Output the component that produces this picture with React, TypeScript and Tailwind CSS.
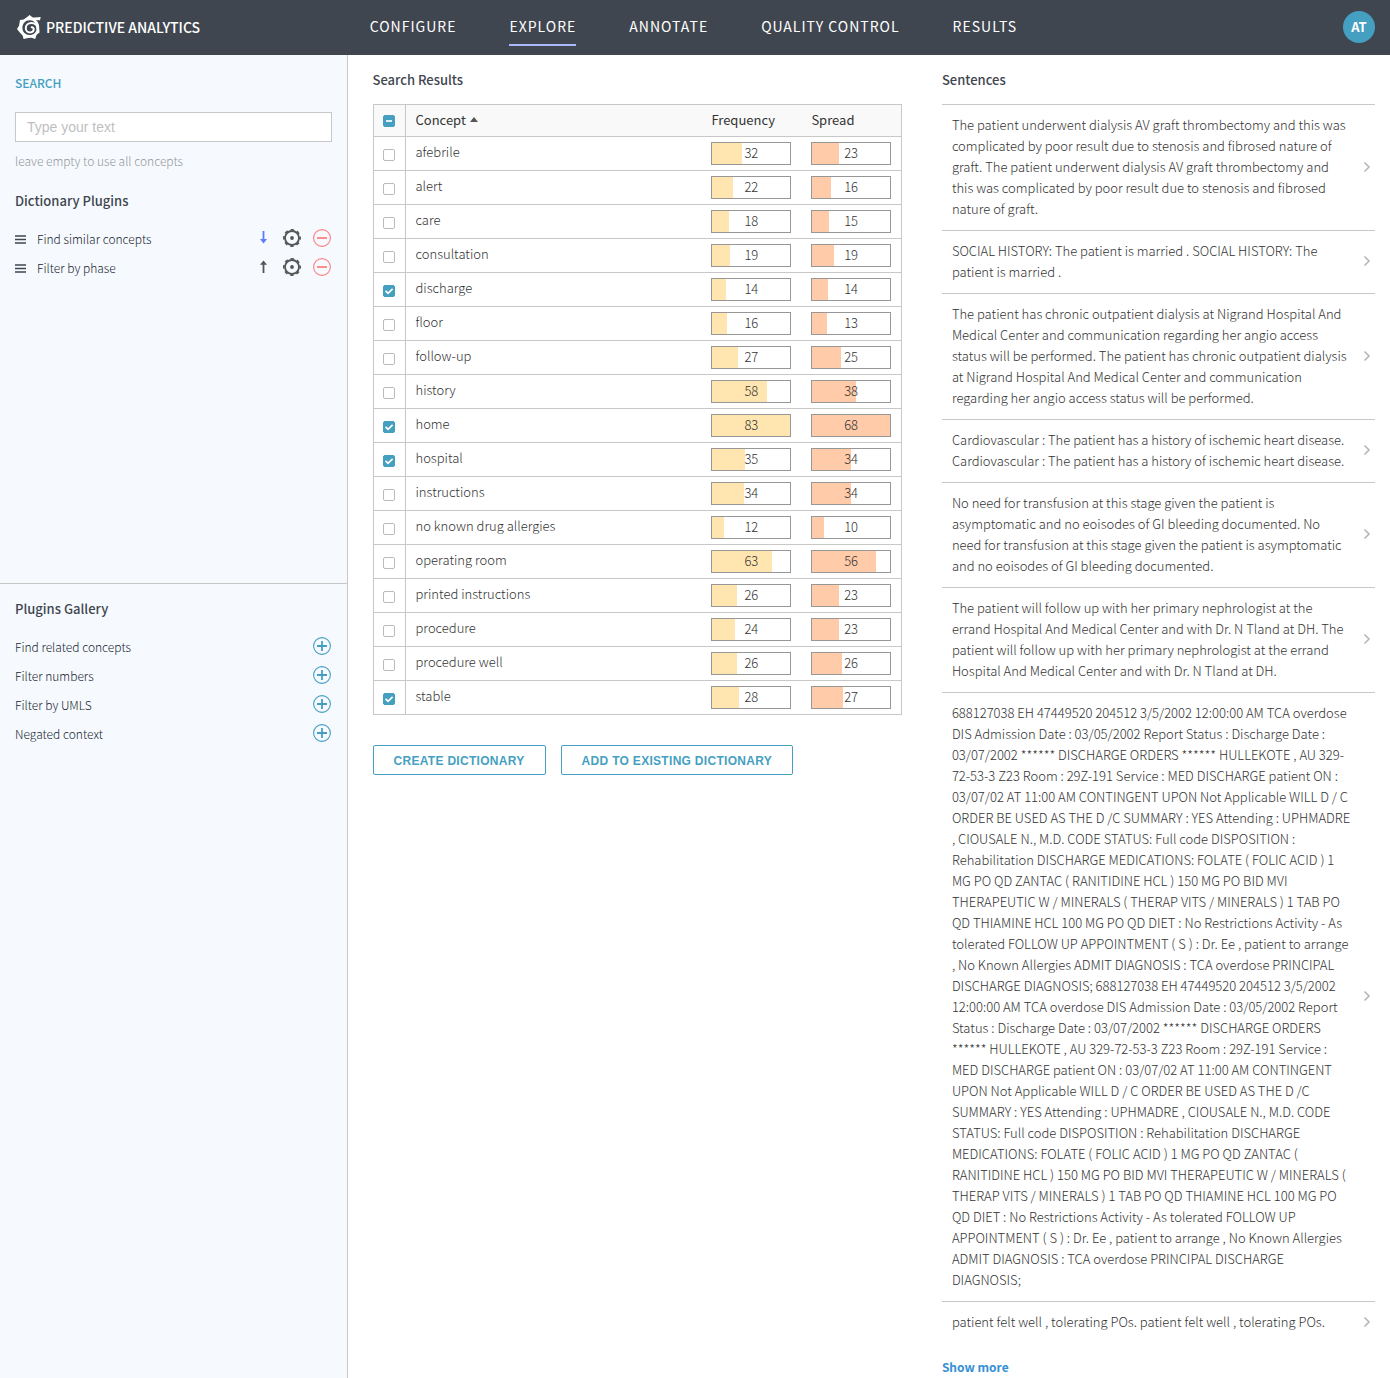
import { useEffect, useRef, useState } from "react";

const NAV = ["Configure", "Explore", "Annotate", "Quality Control", "Results"];

const PLUGINS = [
  { name: "Find similar concepts", direction: "down" },
  { name: "Filter by phase", direction: "up" },
];

const GALLERY = ["Find related concepts", "Filter numbers", "Filter by UMLS", "Negated context"];

type Concept = { name: string; frequency: number; spread: number };

const CONCEPTS: Concept[] = [
  { name: "afebrile", frequency: 32, spread: 23 },
  { name: "alert", frequency: 22, spread: 16 },
  { name: "care", frequency: 18, spread: 15 },
  { name: "consultation", frequency: 19, spread: 19 },
  { name: "discharge", frequency: 14, spread: 14 },
  { name: "floor", frequency: 16, spread: 13 },
  { name: "follow-up", frequency: 27, spread: 25 },
  { name: "history", frequency: 58, spread: 38 },
  { name: "home", frequency: 83, spread: 68 },
  { name: "hospital", frequency: 35, spread: 34 },
  { name: "instructions", frequency: 34, spread: 34 },
  { name: "no known drug allergies", frequency: 12, spread: 10 },
  { name: "operating room", frequency: 63, spread: 56 },
  { name: "printed instructions", frequency: 26, spread: 23 },
  { name: "procedure", frequency: 24, spread: 23 },
  { name: "procedure well", frequency: 26, spread: 26 },
  { name: "stable", frequency: 28, spread: 27 },
];

const DISCHARGE =
  "688127038 EH 47449520 204512 3/5/2002 12:00:00 AM TCA overdose DIS Admission Date : 03/05/2002 Report Status : Discharge Date : 03/07/2002 ****** DISCHARGE ORDERS ****** HULLEKOTE , AU 329-72-53-3 Z23 Room : 29Z-191 Service : MED DISCHARGE patient ON : 03/07/02 AT 11:00 AM CONTINGENT UPON Not Applicable WILL D / C ORDER BE USED AS THE D /C SUMMARY : YES Attending : UPHMADRE , CIOUSALE N., M.D. CODE STATUS: Full code DISPOSITION : Rehabilitation DISCHARGE MEDICATIONS: FOLATE ( FOLIC ACID ) 1 MG PO QD ZANTAC ( RANITIDINE HCL ) 150 MG PO BID MVI THERAPEUTIC W / MINERALS ( THERAP VITS / MINERALS ) 1 TAB PO QD THIAMINE HCL 100 MG PO QD DIET : No Restrictions Activity - As tolerated FOLLOW UP APPOINTMENT ( S ) : Dr. Ee , patient to arrange , No Known Allergies ADMIT DIAGNOSIS : TCA overdose PRINCIPAL DISCHARGE DIAGNOSIS;";

const SENTENCES = [
  "The patient underwent dialysis AV graft thrombectomy and this was complicated by poor result due to stenosis and fibrosed nature of graft. The patient underwent dialysis AV graft thrombectomy and this was complicated by poor result due to stenosis and fibrosed nature of graft.",
  "SOCIAL HISTORY: The patient is married . SOCIAL HISTORY: The patient is married .",
  "The patient has chronic outpatient dialysis at Nigrand Hospital And Medical Center and communication regarding her angio access status will be performed. The patient has chronic outpatient dialysis at Nigrand Hospital And Medical Center and communication regarding her angio access status will be performed.",
  "Cardiovascular : The patient has a history of ischemic heart disease. Cardiovascular : The patient has a history of ischemic heart disease.",
  "No need for transfusion at this stage given the patient is asymptomatic and no eoisodes of GI bleeding documented. No need for transfusion at this stage given the patient is asymptomatic and no eoisodes of GI bleeding documented.",
  "The patient will follow up with her primary nephrologist at the errand Hospital And Medical Center and with Dr. N Tland at DH. The patient will follow up with her primary nephrologist at the errand Hospital And Medical Center and with Dr. N Tland at DH.",
  `${DISCHARGE} ${DISCHARGE}`,
  "patient felt well , tolerating POs. patient felt well , tolerating POs.",
];

function Logo() {
  return (
    <svg width="24" height="24" viewBox="0 0 24 24" fill="none" stroke="#fff" aria-hidden="true">
      <path
        fill="#fff"
        stroke="none"
        fillRule="evenodd"
        d="M12.6 0 L15.4 2.3 C18 2.8 21 2.2 23.7 2 L23 5.3 C21.6 5 20.2 5 19 4.9 C21.4 7 22.4 10 22.2 13 L22.6 17.6 L19.6 19.8 L18.2 24 L14.6 22.8 L11 23 L6.6 24 L5.6 20.4 L3 17.8 L0 14 L2 10.8 L3 5 L6.6 4.4 L9.8 2.3 Z M12.8 5.2 C8.4 5.2 5.4 8.6 5.4 12.8 C5.4 17 8.6 20 12.6 20 C16.6 20 19.6 17.2 19.6 13.4 C19.6 8.6 16.8 5.2 12.8 5.2 Z"
      />
      <path
        d="M20.4 13.6 C20.2 9.8 17.6 8 14.4 8 C11 8 8.8 10.4 8.8 13.2 C8.8 15.8 10.7 17.4 13 17.4 C15.3 17.4 16.7 15.8 16.7 14.1 C16.7 12.8 15.8 12.1 14.7 12.3"
        strokeWidth="2"
        strokeLinecap="round"
      />
    </svg>
  );
}

function ArrowIcon({ direction }: { direction: string }) {
  return direction === "down" ? (
    <svg width="7" height="13" viewBox="0 0 7 13" aria-hidden="true">
      <path d="M2.6 0H4.4V8H7L3.5 12.6L0 8H2.6Z" fill="#5b7cff" />
    </svg>
  ) : (
    <svg width="7" height="13" viewBox="0 0 7 13" aria-hidden="true">
      <path d="M2.6 13H4.4V4.8H7L3.5 .4L0 4.8H2.6Z" fill="#555" />
    </svg>
  );
}

function GearIcon() {
  return (
    <svg width="18" height="18" viewBox="0 0 18 18" fill="none" aria-hidden="true">
      <circle cx="9" cy="9" r="7" stroke="#555" strokeWidth="1.8" />
      <circle cx="9" cy="9" r="8.2" stroke="#555" strokeWidth="1.6" strokeDasharray="3.4 3.04" strokeDashoffset="1.7" />
      <circle cx="9" cy="9" r="1.9" fill="#555" />
    </svg>
  );
}

function CircleIcon({ plus }: { plus?: boolean }) {
  const color = plus ? "#459fc1" : "#ff8080";
  return (
    <svg width="18" height="18" viewBox="0 0 18 18" fill="none" stroke={color} aria-hidden="true">
      <circle cx="9" cy="9" r="8.4" strokeWidth="1.1" />
      <path d={plus ? "M4 9H14M9 4V14" : "M4 9H14"} strokeWidth="1.8" />
    </svg>
  );
}

function CheckBox({
  label,
  checked,
  mixed = false,
  onChange,
}: {
  label: string;
  checked: boolean;
  mixed?: boolean;
  onChange: () => void;
}) {
  const ref = useRef<HTMLInputElement>(null);
  useEffect(() => {
    if (ref.current) ref.current.indeterminate = mixed;
  }, [mixed]);
  return (
    <span className="relative block size-3">
      <input
        ref={ref}
        type="checkbox"
        aria-label={label}
        checked={checked}
        onChange={onChange}
        className="block size-3 cursor-pointer appearance-none rounded-[2px] border border-[#bbb] bg-white checked:border-[#459fc1] checked:bg-[#459fc1] indeterminate:border-[#459fc1] indeterminate:bg-[#459fc1]"
      />
      {(checked || mixed) && (
        <svg
          viewBox="0 0 12 12"
          className="pointer-events-none absolute inset-0 size-3"
          fill="none"
          stroke="#fff"
          strokeWidth="1.7"
          aria-hidden="true"
        >
          <path d={mixed ? "M3 6H9" : "M2.6 5.9L5 8.4L9.6 3.9"} />
        </svg>
      )}
    </span>
  );
}

function Meter({ value, max, fill }: { value: number; max: number; fill: string }) {
  return (
    <div className="relative h-[23px] border border-[#979797] bg-white text-center leading-[19px]">
      <div className={`absolute inset-y-0 left-0 ${fill}`} style={{ width: `${(value / max) * 100}%` }} />
      <span className="relative">{value}</span>
    </div>
  );
}

function ResultsTable() {
  const [selected, setSelected] = useState(["discharge", "home", "hospital", "stable"]);
  const all = selected.length === CONCEPTS.length;
  const toggle = (name: string) =>
    setSelected((s) => (s.includes(name) ? s.filter((n) => n !== name) : [...s, name]));

  return (
    <table className="w-full table-fixed border-collapse border border-[#c8c8c8] text-[13px]">
      <colgroup>
        <col className="w-8" />
        <col />
        <col className="w-[100px]" />
        <col className="w-[100px]" />
      </colgroup>
      <thead>
        <tr className="h-8 border-b border-[#c8c8c8] bg-[#f9f9f9] text-left">
          <th className="border-r border-[#c8c8c8] pl-[9px]">
            <CheckBox
              label="Select all concepts"
              checked={all}
              mixed={!all && selected.length > 0}
              onChange={() => setSelected(all ? [] : CONCEPTS.map((c) => c.name))}
            />
          </th>
          <th className="px-2.5 pb-0.5 font-normal" aria-sort="ascending">
            <button className="flex items-center gap-1 leading-5">
              Concept
              <svg width="8" height="5" viewBox="0 0 8 5" aria-hidden="true">
                <path d="M4 0L8 5H0Z" fill="#555" />
              </svg>
            </button>
          </th>
          <th className="px-2.5 pb-0.5 font-normal leading-5">Frequency</th>
          <th className="px-2.5 pb-0.5 font-normal leading-5">Spread</th>
        </tr>
      </thead>
      <tbody>
        {CONCEPTS.map((c) => (
          <tr key={c.name} className="h-[34px] border-b border-[#c8c8c8]">
            <td className="border-r border-[#c8c8c8] pt-[3px] pl-[9px]">
              <CheckBox label={`Select ${c.name}`} checked={selected.includes(c.name)} onChange={() => toggle(c.name)} />
            </td>
            <td className="px-2.5 pb-1 leading-5">{c.name}</td>
            <td className="px-2.5">
              <Meter value={c.frequency} max={83} fill="bg-[#ffe6b0]" />
            </td>
            <td className="px-2.5">
              <Meter value={c.spread} max={68} fill="bg-[#ffcba8]" />
            </td>
          </tr>
        ))}
      </tbody>
    </table>
  );
}

export default function App() {
  return (
    <div className="flex min-h-screen flex-col bg-white font-['Noto_Sans_CJK_SC',sans-serif] text-[13px] font-light text-[#333]">
      <header className="flex h-[55px] items-center bg-[#3f464f] pr-[15px] pb-px text-white">
        <a href="#home" className="flex w-1/4 items-center gap-[5px] pl-[17px] text-[14px] font-medium">
          <Logo />
          PREDICTIVE ANALYTICS
        </a>
        <nav className="flex flex-1 gap-[53px] pl-[26px] text-[14px] font-normal uppercase tracking-[1px]">
          {NAV.map((item) => (
            <a
              key={item}
              href={`#${item}`}
              aria-current={item === "Explore" ? "page" : undefined}
              className="whitespace-nowrap border-b-2 border-transparent pt-[7px] pb-2 leading-5 aria-[current=page]:border-[#a9b8ff]"
            >
              {item}
            </a>
          ))}
        </nav>
        <button className="size-8 rounded-full bg-[#459fc1] text-[13px] font-bold" aria-label="Account">
          AT
        </button>
      </header>

      <div className="flex flex-1">
        <aside className="grid w-1/4 grid-rows-[2fr_3fr] border-r border-[#c8c8c8] bg-[#f6faff] text-[12px] text-[#20262e]">
          <section className="border-b border-[#c8c8c8] px-[15px] pt-[19px]">
            <label htmlFor="search" className="block leading-[18px] font-medium text-[#459fc1]">
              SEARCH
            </label>
            <input
              id="search"
              type="text"
              placeholder="Type your text"
              className="mt-5 block h-[30px] w-full border border-[#c8c8c8] bg-white px-[11px] font-['Liberation_Sans',sans-serif] text-[14px] placeholder:text-[#bfbfbf]"
            />
            <p className="mt-[9px] leading-5 text-[#94979a]">leave empty to use all concepts</p>
            <h2 className="mt-5 text-[13px] leading-5 font-medium text-[#3f464f]">Dictionary Plugins</h2>
            <ul className="mt-3.5">
              {PLUGINS.map((p) => (
                <li key={p.name} className="flex h-[29px] items-center">
                  <svg width="11" height="9" viewBox="0 0 11 9" className="mr-[11px]" aria-hidden="true">
                    <path d="M0 1H11M0 4.5H11M0 8H11" stroke="#3f464f" strokeWidth="1.6" />
                  </svg>
                  <span className="flex-1 pb-0.5">{p.name}</span>
                  <span className="mr-px mb-1 flex items-center">
                    <button aria-label={`Move ${p.name} ${p.direction}`}>
                      <ArrowIcon direction={p.direction} />
                    </button>
                    <button className="ml-4" aria-label={`Configure ${p.name}`}>
                      <GearIcon />
                    </button>
                    <button className="ml-3" aria-label={`Remove ${p.name}`}>
                      <CircleIcon />
                    </button>
                  </span>
                </li>
              ))}
            </ul>
          </section>
          <section className="px-[15px] pt-[15px]">
            <h2 className="text-[13px] leading-5 font-medium text-[#3f464f]">Plugins Gallery</h2>
            <ul className="mt-3.5">
              {GALLERY.map((name) => (
                <li key={name} className="flex h-[29px] items-center justify-between">
                  <span className="pb-0.5">{name}</span>
                  <button className="mr-px mb-1" aria-label={`Add ${name}`}>
                    <CircleIcon plus />
                  </button>
                </li>
              ))}
            </ul>
          </section>
        </aside>

        <main className="grid flex-1 grid-cols-[55fr_45fr] gap-10 pt-[15px] pr-[15px] pl-[25px]">
          <section className="min-w-0">
            <h2 className="mb-3.5 leading-5 font-medium text-[#3f464f]">Search Results</h2>
            <ResultsTable />
            <div className="mt-[30px] flex gap-[15px] font-['Liberation_Sans',sans-serif] text-[12px] font-bold tracking-wide text-[#459fc1]">
              <button className="h-[30px] rounded-[2px] border border-[#459fc1] px-5 pt-0.5">CREATE DICTIONARY</button>
              <button className="h-[30px] rounded-[2px] border border-[#459fc1] px-5 pt-0.5">
                ADD TO EXISTING DICTIONARY
              </button>
            </div>
          </section>

          <section className="min-w-0">
            <h2 className="mb-3.5 leading-5 font-medium text-[#3f464f]">Sentences</h2>
            <ul>
              {SENTENCES.map((text) => (
                <li key={text} className="flex items-center border-t border-[#c8c8c8] pt-[9px] pr-1 pb-[11px] pl-2.5">
                  <p className="flex-1 leading-[21px]">{text}</p>
                  <button className="ml-3" aria-label="Open sentence">
                    <svg width="8" height="12" viewBox="0 0 8 12" fill="none" aria-hidden="true">
                      <path d="M1.5 1.5L6 6L1.5 10.5" stroke="#b4b4b4" strokeWidth="1.5" />
                    </svg>
                  </button>
                </li>
              ))}
            </ul>
            <a href="#more" className="mt-3.5 block text-[12px] leading-5 font-bold text-[#348fd6]">
              Show more
            </a>
          </section>
        </main>
      </div>
    </div>
  );
}
